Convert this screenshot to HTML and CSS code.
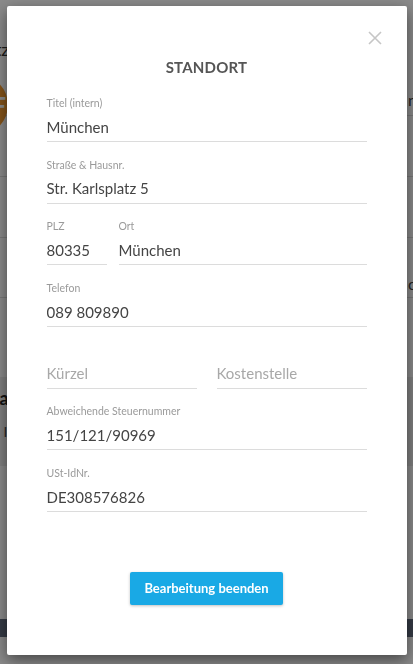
FILE: index.html
```html
<!DOCTYPE html>
<html lang="de">
<head>
    <meta charset="UTF-8">
    <meta name="viewport" content="width=device-width, initial-scale=1.0">
    <title>Standort bearbeiten</title>
    <link rel="stylesheet" href="styles.css">
</head>
<body>

    <!-- page behind the dialog -->
    <div class="page">
        <div class="page-head"><span class="page-head-text">Netz</span></div>
        <div class="page-row page-row--first">
            <span class="avatar">F</span>
            <span class="row-end">n</span>
        </div>
        <div class="page-row"></div>
        <div class="page-row"></div>
        <div class="page-row page-row--bottom"><span class="row-end">o</span></div>
        <div class="page-row page-row--last"></div>
        <div class="page-panel">
            <div class="panel-title">Da</div>
            <div class="panel-text">n I</div>
        </div>
        <div class="page-footer"></div>
    </div>

    <div class="overlay">
        <div class="modal">
            <button class="modal-close" type="button" aria-label="Schließen">
                <svg width="14" height="14" viewBox="0 0 14 14">
                    <path d="M1 1 L13 13 M13 1 L1 13" stroke="currentColor" stroke-width="1.6" fill="none"/>
                </svg>
            </button>

            <h2 class="modal-title">STANDORT</h2>

            <form class="modal-form">
                <div class="field">
                    <label class="field-label" for="title">Titel (intern)</label>
                    <input class="field-input" id="title" type="text" value="München">
                </div>

                <div class="field">
                    <label class="field-label" for="street">Straße &amp; Hausnr.</label>
                    <input class="field-input" id="street" type="text" value="Str. Karlsplatz 5">
                </div>

                <div class="field-row field-row--zip">
                    <div class="field">
                        <label class="field-label" for="zip">PLZ</label>
                        <input class="field-input" id="zip" type="text" value="80335">
                    </div>
                    <div class="field">
                        <label class="field-label" for="city">Ort</label>
                        <input class="field-input" id="city" type="text" value="München">
                    </div>
                </div>

                <div class="field">
                    <label class="field-label" for="phone">Telefon</label>
                    <input class="field-input" id="phone" type="text" value="089 809890">
                </div>

                <div class="field-row field-row--half">
                    <div class="field">
                        <span class="field-label"></span>
                        <input class="field-input" type="text" placeholder="Kürzel">
                    </div>
                    <div class="field">
                        <span class="field-label"></span>
                        <input class="field-input" type="text" placeholder="Kostenstelle">
                    </div>
                </div>

                <div class="field">
                    <label class="field-label" for="taxno">Abweichende Steuernummer</label>
                    <input class="field-input" id="taxno" type="text" value="151/121/90969">
                </div>

                <div class="field">
                    <label class="field-label" for="vat">USt-IdNr.</label>
                    <input class="field-input" id="vat" type="text" value="DE308576826">
                </div>
            </form>

            <div class="modal-actions">
                <button class="btn-primary" type="button">Bearbeitung beenden</button>
            </div>
        </div>
    </div>

</body>
</html>
```

FILE: styles.css
```css
/* Base */
* {
    box-sizing: border-box;
}

body {
    margin: 0;
    font-family: Lato, "Liberation Sans", sans-serif;
    background: #fff;
    overflow: hidden;
}

/* Page behind the dialog */
.page {
    height: 664px;
}

.page-head {
    height: 70px;
    padding-top: 38px;
    font-size: 18px;
    color: #333;
}

.page-head-text {
    margin-left: -28px;
}

.page-row {
    height: 61px;
    border-bottom: 1px solid #ddd;
    display: flex;
    align-items: center;
    color: #444;
    font-size: 16px;
}

.page-row--first {
    height: 46px;
    align-items: flex-start;
}

.page-row--bottom {
    height: 60px;
    align-items: flex-end;
    padding-bottom: 4px;
}

.page-row--last {
    height: 79px;
    border-bottom: none;
}

.avatar {
    width: 60px;
    height: 60px;
    margin-left: -52px;
    margin-top: 5px;
    border-radius: 50%;
    background: #f39a2e;
    color: #fff;
    font-size: 24px;
    font-weight: bold;
    display: flex;
    align-items: center;
    justify-content: flex-end;
    padding-right: 2px;
}

.row-end {
    margin-left: auto;
    margin-right: -4px;
}

.page-row--first .row-end {
    margin-top: 20px;
}

.page-panel {
    height: 89px;
    background: #ececec;
    padding-top: 10px;
}

.panel-title {
    margin-left: -14px;
    font-size: 18px;
    font-weight: bold;
    color: #222;
}

.panel-text {
    margin-top: 14px;
    margin-left: -8px;
    font-size: 14px;
    color: #444;
}

.page-footer {
    margin-top: 153px;
    height: 18px;
    background: #636d80;
}

/* Dialog */
.overlay {
    position: fixed;
    inset: 0;
    background: rgba(0, 0, 0, 0.46);
    display: flex;
    justify-content: center;
    align-items: flex-start;
}

.modal {
    position: relative;
    width: 400px;
    margin-top: 6px;
    padding: 52px 40px 50px;
    background: #fff;
    border-radius: 2px;
    box-shadow: 0 5px 15px rgba(0, 0, 0, 0.5);
}

.modal-close {
    position: absolute;
    top: 25px;
    right: 25px;
    padding: 0;
    border: none;
    background: none;
    color: #c6c6c6;
    line-height: 0;
    cursor: pointer;
}

.modal-title {
    margin: 0 0 20px;
    text-align: center;
    font-size: 15px;
    line-height: 18px;
    font-weight: bold;
    color: #555;
    letter-spacing: 0.2px;
}

/* Form fields */
.modal-form {
    display: flow-root;
}

.field {
    display: flex;
    flex-direction: column;
    margin-bottom: 15.7px;
}

.field-label {
    display: block;
    height: 14px;
    margin-bottom: 3px;
    font-size: 10.5px;
    line-height: 14px;
    color: #9a9a9a;
}

.field-input {
    width: 100%;
    height: 29px;
    padding: 0 0 1px;
    border: none;
    border-bottom: 1px solid #dcdcdc;
    outline: none;
    font-family: inherit;
    font-size: 15px;
    color: #444;
    background: transparent;
}

.field-input::placeholder {
    color: #a8a8a8;
}

.field-row {
    display: grid;
}

.field-row--zip {
    grid-template-columns: 60px 1fr;
    column-gap: 12px;
}

.field-row--half {
    grid-template-columns: 1fr 1fr;
    column-gap: 20px;
}

/* Actions */
.modal-actions {
    margin-top: 44px;
    display: flex;
    justify-content: center;
}

.btn-primary {
    height: 33px;
    padding: 0 14px;
    border: none;
    border-radius: 2px;
    background: #19a9e5;
    color: #fff;
    font-family: inherit;
    font-size: 13px;
    font-weight: bold;
    box-shadow: 0 1px 3px rgba(0, 0, 0, 0.25);
    cursor: pointer;
}
```
